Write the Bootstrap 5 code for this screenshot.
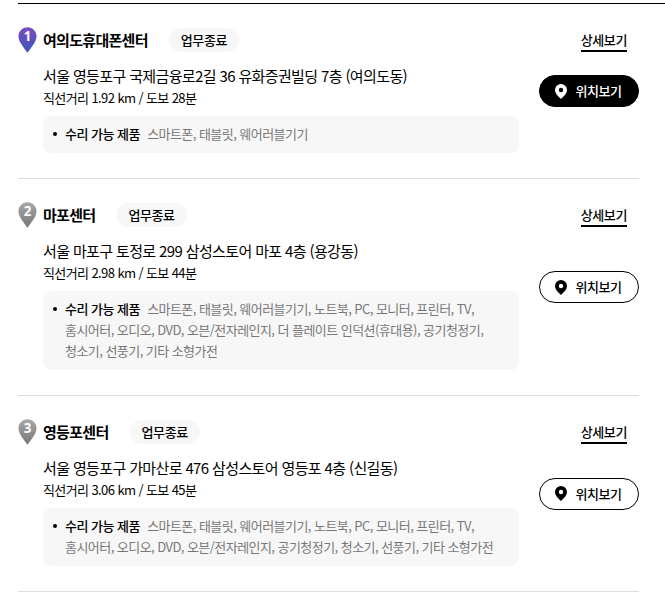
<!DOCTYPE html>
<html lang="ko">
<head>
<meta charset="UTF-8">
<title>센터 목록</title>
<link href="https://cdn.jsdelivr.net/npm/bootstrap@5.3.0/dist/css/bootstrap.min.css" rel="stylesheet">
<style>
body {
  font-family: "Noto Sans CJK KR", "Noto Sans", sans-serif;
  color: #000;
  background: #fff;
  overflow: hidden;
}
.center-list {
  margin: 3px 0 0 18px;
  border-top: 1px solid #000;
}
.center-item {
  width: 621px;
  padding: 23px 0 25px;
  border-bottom: 1px solid #ddd;
}
.center-main {
  width: 501px;
}
.pin-icon {
  width: 19px;
  height: 26px;
  margin-right: 6px;
  flex-shrink: 0;
}
.pin-num {
  font-family: "Noto Sans", sans-serif;
  font-size: 14px;
  font-weight: 700;
  fill: #fff;
}
.center-name {
  font-size: 15px;
  font-weight: 700;
  letter-spacing: -.7px;
  line-height: 24px;
  margin: 0;
}
.status-pill {
  margin-left: 21px;
  height: 24px;
  padding: 0 12px;
  border-radius: 12px;
  background: #f7f7f7;
  font-size: 13px;
  font-weight: 500;
  letter-spacing: -.4px;
  line-height: 24px;
}
.center-addr {
  margin: 12px 0 0 25px;
  font-size: 15px;
  letter-spacing: -.63px;
  line-height: 22px;
}
.center-dist {
  margin: 1px 0 0 25px;
  font-size: 13px;
  letter-spacing: -.6px;
  line-height: 20px;
}
.product-box {
  margin: 8px 0 0 25px;
  padding: 7px 22px 9px;
  background: #f7f7f7;
  border-radius: 8px;
  font-size: 13px;
  line-height: 21px;
  letter-spacing: -.55px;
  color: #777;
  position: relative;
}
.product-box::before {
  content: "";
  position: absolute;
  left: 10px;
  top: 16px;
  width: 4px;
  height: 4px;
  border-radius: 50%;
  background: #000;
}
.product-box b {
  font-weight: 500;
  color: #000;
  letter-spacing: -.5px;
  margin-right: 4px;
}
.side-col {
  display: grid;
  grid-template-rows: 1fr auto 1fr;
  justify-items: end;
  align-items: start;
}
.detail-link {
  font-size: 13px;
  font-weight: 500;
  letter-spacing: -.4px;
  line-height: 20px;
  color: #000;
  text-decoration: none;
  border-bottom: 2px solid #000;
  margin: 3px 12px 0 0;
}
.map-btn {
  width: 100px;
  height: 32px;
  margin-top: 2px;
  padding: 0;
  border: 1px solid #000;
  border-radius: 16px;
  background: #fff;
  color: #000;
  font-size: 13px;
  font-weight: 500;
  letter-spacing: -.4px;
}
.map-btn.is-on {
  background: #000;
  color: #fff;
}
.map-btn svg {
  width: 12px;
  height: 15px;
  margin-left: -1px;
  fill: currentColor;
}
</style>
</head>
<body>
<svg width="0" height="0" class="position-absolute">
  <defs>
    <linearGradient id="pinPurple" x1="0" y1="0" x2="0" y2="1">
      <stop offset="0" stop-color="#7d4cc0"/>
      <stop offset="1" stop-color="#3a58b6"/>
    </linearGradient>
    <linearGradient id="pinGrey" x1="0" y1="0" x2="0" y2="1">
      <stop offset="0" stop-color="#a8a8a8"/>
      <stop offset="1" stop-color="#777"/>
    </linearGradient>
  </defs>
</svg>

<div class="center-list">

  <div class="center-item d-flex justify-content-between">
    <div class="center-main">
      <div class="d-flex align-items-center">
        <svg class="pin-icon" viewBox="0 0 20 27"><path fill="url(#pinPurple)" d="M10 0C4.500 0 .5 4.200 .5 9.500c0 6 5.500 11.500 9.500 17.500 4-6 9.500-11.500 9.500-17.500C19.500 4.200 15.500 0 10 0z"/><text class="pin-num" x="10" y="15" text-anchor="middle">1</text></svg>
        <h2 class="center-name">여의도휴대폰센터</h2>
        <span class="status-pill">업무종료</span>
      </div>
      <p class="center-addr">서울 영등포구 국제금융로2길 36 유화증권빌딩 7층 (여의도동)</p>
      <p class="center-dist">직선거리 1.92 km / 도보 28분</p>
      <div class="product-box"><b>수리 가능 제품</b> 스마트폰, 태블릿, 웨어러블기기</div>
    </div>
    <div class="side-col">
      <a href="#" class="detail-link">상세보기</a>
      <button type="button" class="map-btn is-on d-flex align-items-center justify-content-center gap-2">
        <svg viewBox="0 0 12 15"><path fill-rule="evenodd" d="M6 0a6 6 0 0 0-6 6c0 3.500 3.500 6.500 6 9 2.500-2.500 6-5.500 6-9a6 6 0 0 0-6-6zm0 3.800a2.200 2.200 0 1 1 0 4.400 2.200 2.200 0 0 1 0-4.400z"/></svg>
        위치보기
      </button>
    </div>
  </div>

  <div class="center-item d-flex justify-content-between">
    <div class="center-main">
      <div class="d-flex align-items-center">
        <svg class="pin-icon" viewBox="0 0 20 27"><path fill="url(#pinGrey)" d="M10 0C4.500 0 .5 4.200 .5 9.500c0 6 5.500 11.500 9.500 17.500 4-6 9.500-11.500 9.500-17.500C19.500 4.200 15.500 0 10 0z"/><text class="pin-num" x="10" y="15" text-anchor="middle">2</text></svg>
        <h2 class="center-name">마포센터</h2>
        <span class="status-pill">업무종료</span>
      </div>
      <p class="center-addr">서울 마포구 토정로 299 삼성스토어 마포 4층 (용강동)</p>
      <p class="center-dist">직선거리 2.98 km / 도보 44분</p>
      <div class="product-box"><b>수리 가능 제품</b> 스마트폰, 태블릿, 웨어러블기기, 노트북, PC, 모니터, 프린터, TV,<br>홈시어터, 오디오, DVD, 오븐/전자레인지, 더 플레이트 인덕션(휴대용), 공기청정기,<br>청소기, 선풍기, 기타 소형가전</div>
    </div>
    <div class="side-col">
      <a href="#" class="detail-link">상세보기</a>
      <button type="button" class="map-btn d-flex align-items-center justify-content-center gap-2">
        <svg viewBox="0 0 12 15"><path fill-rule="evenodd" d="M6 0a6 6 0 0 0-6 6c0 3.500 3.500 6.500 6 9 2.500-2.500 6-5.500 6-9a6 6 0 0 0-6-6zm0 3.800a2.200 2.200 0 1 1 0 4.400 2.200 2.200 0 0 1 0-4.400z"/></svg>
        위치보기
      </button>
    </div>
  </div>

  <div class="center-item d-flex justify-content-between">
    <div class="center-main">
      <div class="d-flex align-items-center">
        <svg class="pin-icon" viewBox="0 0 20 27"><path fill="url(#pinGrey)" d="M10 0C4.500 0 .5 4.200 .5 9.500c0 6 5.500 11.500 9.500 17.500 4-6 9.500-11.500 9.500-17.500C19.500 4.200 15.500 0 10 0z"/><text class="pin-num" x="10" y="15" text-anchor="middle">3</text></svg>
        <h2 class="center-name">영등포센터</h2>
        <span class="status-pill">업무종료</span>
      </div>
      <p class="center-addr">서울 영등포구 가마산로 476 삼성스토어 영등포 4층 (신길동)</p>
      <p class="center-dist">직선거리 3.06 km / 도보 45분</p>
      <div class="product-box"><b>수리 가능 제품</b> 스마트폰, 태블릿, 웨어러블기기, 노트북, PC, 모니터, 프린터, TV,<br>홈시어터, 오디오, DVD, 오븐/전자레인지, 공기청정기, 청소기, 선풍기, 기타 소형가전</div>
    </div>
    <div class="side-col">
      <a href="#" class="detail-link">상세보기</a>
      <button type="button" class="map-btn d-flex align-items-center justify-content-center gap-2">
        <svg viewBox="0 0 12 15"><path fill-rule="evenodd" d="M6 0a6 6 0 0 0-6 6c0 3.500 3.500 6.500 6 9 2.500-2.500 6-5.500 6-9a6 6 0 0 0-6-6zm0 3.800a2.200 2.200 0 1 1 0 4.400 2.200 2.200 0 0 1 0-4.400z"/></svg>
        위치보기
      </button>
    </div>
  </div>

</div>
<script src="https://cdn.jsdelivr.net/npm/bootstrap@5.3.0/dist/js/bootstrap.bundle.min.js"></script>
</body>
</html>
